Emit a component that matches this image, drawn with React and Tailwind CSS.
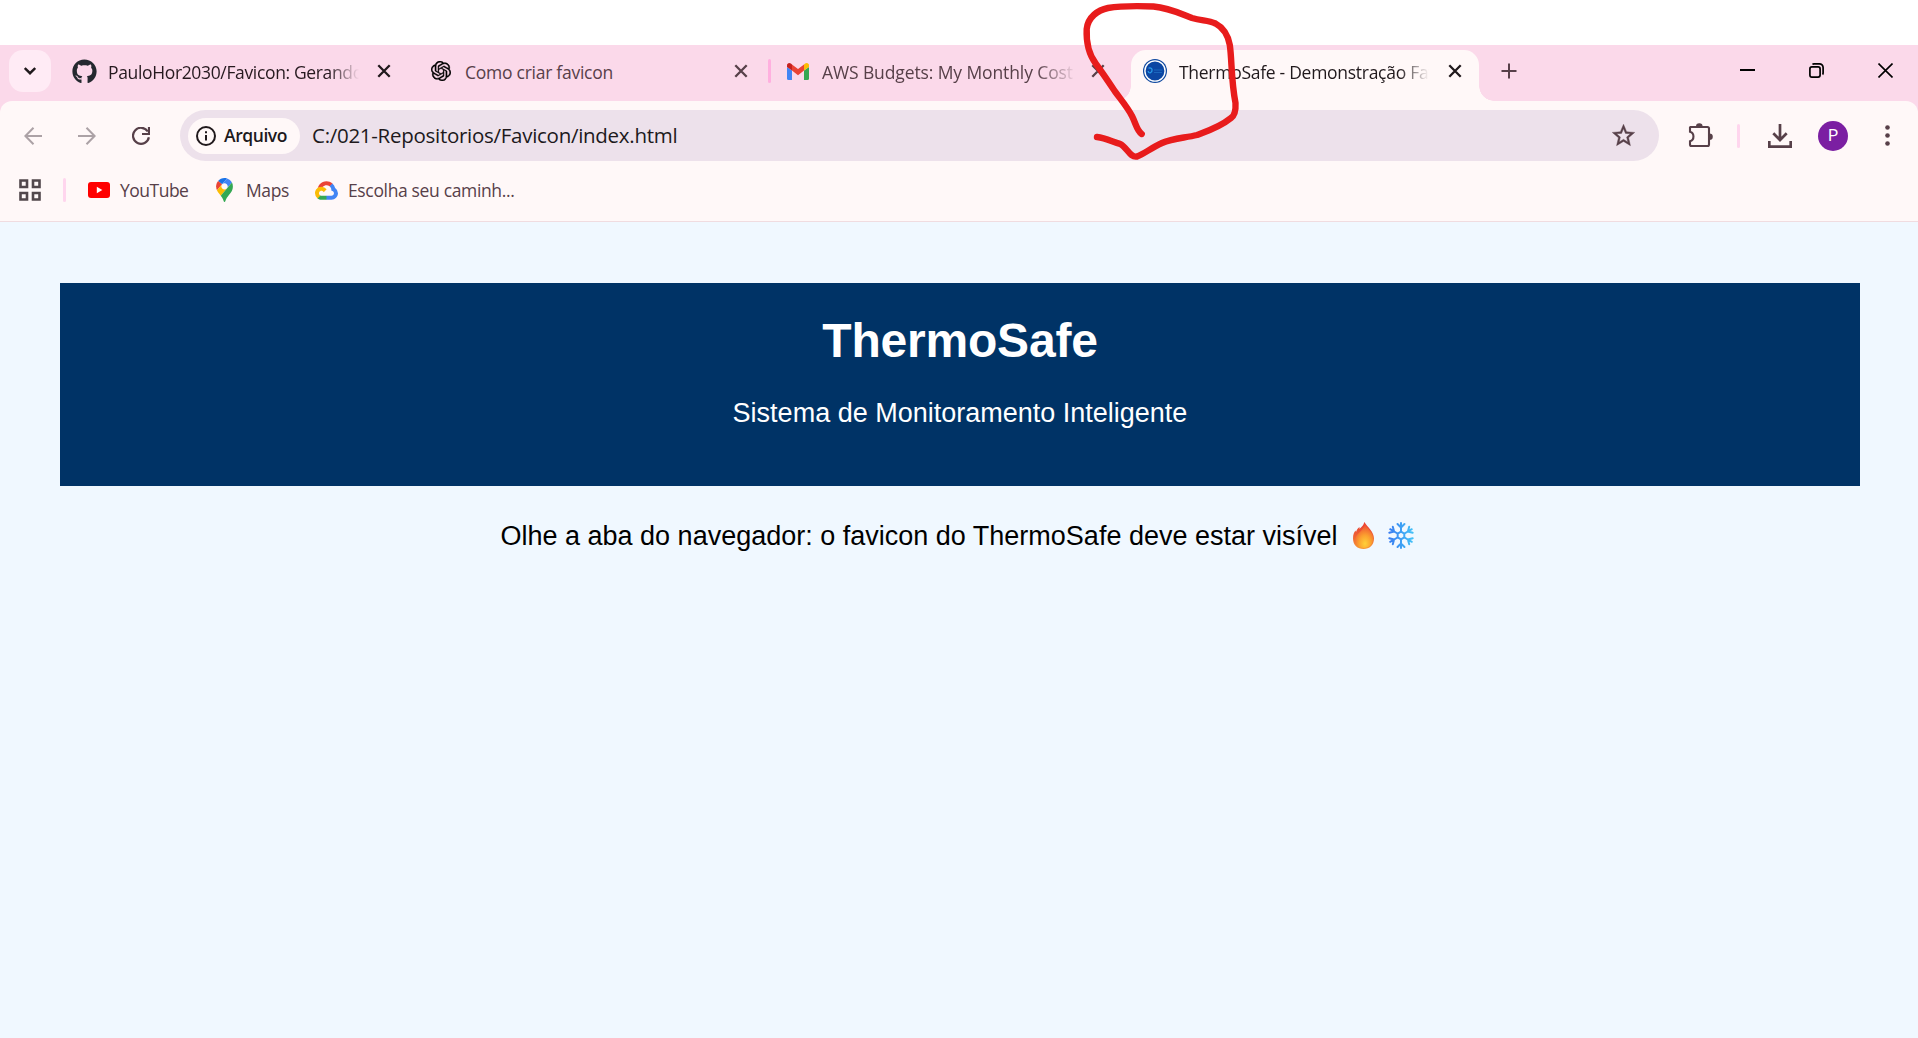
import { FaGithub } from "react-icons/fa";
import { SiOpenai } from "react-icons/si";

function Close({ className = "text-[#574049]" }) {
  return (
    <svg viewBox="0 0 14 14" className={`size-3.5 shrink-0 ${className}`} fill="none" stroke="currentColor" strokeWidth="2.3">
      <path d="M1.3 1.3 12.7 12.7M12.7 1.3 1.3 12.7" />
    </svg>
  );
}

function Gmail() {
  return (
    <svg viewBox="0 0 22 17" className="h-[17px] w-[22px] shrink-0">
      <path fill="#4285f4" d="M0 4v11.5A1.5 1.5 0 0 0 1.5 17H5V7.5z" />
      <path fill="#34a853" d="M17 7.5V17h3.5a1.5 1.5 0 0 0 1.5-1.5V4z" />
      <path fill="#ea4335" d="m5 1.5 6 4.6 6-4.6v6L11 12.2 5 7.5z" />
      <path fill="#c5221f" d="M0 2.3C0 .3 2.2-.7 3.9.6L5 1.5v6L0 4z" />
      <path fill="#fbbc04" d="M17 1.5 18.1.6C19.8-.7 22 .3 22 2.3V4l-5 3.5z" />
    </svg>
  );
}

function ThermoSafeIcon() {
  return (
    <svg viewBox="0 0 24 24" className="size-6 shrink-0">
      <circle cx="12" cy="12" r="12" fill="#0f49a0" />
      <circle cx="12" cy="12" r="10.1" fill="#0b46a3" stroke="#fff" strokeWidth="1.4" />
      <path d="M5.500 9.300c1.500-.8 3.400-.3 3.600 1.500.2 1.500-.8 2.600-2 3.200-1.200-.2-2-.9-2-2" fill="none" stroke="#299be8" strokeWidth="1.200" />
      <path d="M11 11h8.500M11 13.500h8" stroke="#1b66bd" strokeWidth="1.100" />
    </svg>
  );
}

function Star() {
  return (
    <svg viewBox="0 0 24 24" className="size-[27px] shrink-0" fill="#574049" stroke="#574049" strokeWidth=".35">
      <path d="m22 9.240-7.190-.62L12 2 9.190 8.630 2 9.240l5.460 4.730L5.820 21 12 17.270 18.180 21l-1.630-7.030zM12 15.400l-3.760 2.270 1-4.280-3.320-2.880 4.380-.38L12 6.100l1.710 4.040 4.380.38-3.320 2.880 1 4.280z" />
    </svg>
  );
}

function Puzzle() {
  return (
    <svg viewBox="0 0 25 25" className="size-[25px] shrink-0" fill="none" stroke="#574049" strokeWidth="2.100">
      <path d="M2.500 4h17A1.500 1.500 0 0 1 21 5.500v16a1.500 1.500 0 0 1-1.500 1.500h-16A1.500 1.500 0 0 1 2 21.500v-3.300c4.600-1.200 4.600-8.200 0-9.400V4.500z" />
      <path d="M8 3.500a3.300 3.300 0 0 1 6.600 0zM21.500 10.400a3.300 3.300 0 0 1 0 6.600z" fill="#574049" stroke="none" />
    </svg>
  );
}

function MapsPin() {
  return (
    <svg viewBox="0 0 92.300 132.300" className="h-6 w-[17px] shrink-0">
      <path fill="#1a73e8" d="M60.200 2.200C55.800.8 51 0 46.100 0 32 0 19.300 6.400 10.800 16.500l21.800 18.300z" />
      <path fill="#ea4335" d="M10.800 16.500C4.100 24.500 0 34.900 0 46.100c0 8.700 1.700 15.700 4.600 22l28-33.300z" />
      <path fill="#4285f4" d="M46.200 28.500c9.800 0 17.700 7.900 17.700 17.700 0 4.300-1.600 8.300-4.200 11.400 0 0 13.900-16.600 27.500-32.700-5.600-10.800-15.300-19-27-22.700L32.600 34.800c3.300-3.800 8.100-6.300 13.600-6.300" />
      <path fill="#fbbc04" d="M46.200 63.800c-9.800 0-17.700-7.900-17.700-17.700 0-4.300 1.500-8.300 4.100-11.300l-28 33.300c4.800 10.600 12.800 19.200 21 29.900l34.100-40.500c-3.300 3.900-8.100 6.300-13.500 6.300" />
      <path fill="#34a853" d="M59.100 109.200c15.400-24.100 33.300-35 33.300-63 0-7.700-1.900-14.900-5.200-21.300L25.600 98c2.600 3.400 5.300 7.300 7.900 11.300 9.400 14.500 6.800 23.100 12.800 23.100s3.400-8.700 12.800-23.200" />
    </svg>
  );
}

function CloudLogo() {
  return (
    <svg viewBox="0 0 256 206" className="h-[19px] w-[23px] shrink-0">
      <path fill="#ea4335" d="m170.252 56.819 22.253-22.253 1.483-9.370C153.437-11.677 88.976-7.496 52.420 33.920 42.267 45.423 34.734 59.764 30.717 74.573l7.970-1.123 44.505-7.340 3.436-3.513c19.797-21.742 53.270-24.667 76.128-6.168z" />
      <path fill="#4285f4" d="M224.205 73.918a100.250 100.250 0 0 0-30.217-48.722l-31.232 31.232a55.515 55.515 0 0 1 20.379 44.037v5.544c15.350 0 27.797 12.450 27.797 27.796 0 15.352-12.446 27.573-27.797 27.573h-55.671l-5.466 5.934v33.340l5.466 5.231h55.670c39.930.311 72.553-31.494 72.864-71.424a72.303 72.303 0 0 0-31.793-60.541" />
      <path fill="#34a853" d="M71.870 205.796h55.593V161.290H71.870a27.275 27.275 0 0 1-11.480-2.498l-7.884 2.420-22.409 22.252-1.952 7.574c12.567 9.490 27.900 14.825 43.725 14.758" />
      <path fill="#fbbc05" d="M71.870 61.425C31.937 61.664-.237 94.228.001 134.160a72.301 72.301 0 0 0 28.222 56.880l32.248-32.246c-13.990-6.322-20.208-22.786-13.887-36.776 6.320-13.990 22.786-20.208 36.775-13.888a27.796 27.796 0 0 1 13.887 13.888l32.248-32.248A72.224 72.224 0 0 0 71.870 61.425" />
    </svg>
  );
}

function Flame() {
  return (
    <svg viewBox="0 0 21 27" className="h-[27px] w-[21px] shrink-0">
      <defs>
        <linearGradient id="flameOuter" x1="0" y1="0" x2="0" y2="1">
          <stop stopColor="#e83b32" />
          <stop offset=".55" stopColor="#ef6435" />
          <stop offset="1" stopColor="#f79a35" />
        </linearGradient>
        <radialGradient id="flameInner" cx=".55" cy=".82" r=".75">
          <stop stopColor="#ffd03a" />
          <stop offset=".45" stopColor="#fba12f" />
          <stop offset="1" stopColor="#ef4f34" />
        </radialGradient>
      </defs>
      <path fill="url(#flameOuter)" d="M11.300 0c3 5 9.700 9.500 9.700 16.500C21 23 16.500 27 10.500 27S0 23 0 16.500c0-4 1-6 2.500-8L3 10c1-2.500 1.700-3.700 3.500-5V7C8 5 10.500 4 11.300 0z" />
      <path fill="url(#flameInner)" d="M11.800 1.500c2.200 5.500 8.400 8.500 8.400 15 0 5.500-4 9.500-9.200 9.500s-9-3.500-9-8C2 11.500 11 9.500 11.800 1.500z" />
    </svg>
  );
}

function Snowflake() {
  return (
    <svg viewBox="-13 -13.500 26 27" className="h-[27px] w-[26px] shrink-0" fill="none" strokeWidth="2" strokeLinecap="round" strokeLinejoin="round">
      <defs>
        <linearGradient id="ice" gradientUnits="userSpaceOnUse" x1="-13" y1="0" x2="13" y2="0">
          <stop stopColor="#3779f0" />
          <stop offset="1" stopColor="#45c5f8" />
        </linearGradient>
      </defs>
      <g stroke="url(#ice)">
        <path d="M0-3.800 3.300-1.900V1.900L0 3.800-3.300 1.900V-1.900z" />
        <path d="M0-4v-8.500M-3.500-11.500 0-8 3.500-11.500M0 4v8.500M-3.500 11.500 0 8l3.500 3.500" />
        <path d="M3.500-2 10.800-6.300M8.200-8.800l-1.300 4.800 4.800 1.300M-3.500 2l-7.300 4.300M-8.200 8.800l1.300-4.800-4.800-1.300M3.500 2l7.300 4.300M8.200 8.800 6.900 4l4.800-1.300M-3.500-2l-7.300-4.300M-8.200-8.800-6.900-4l-4.800 1.300" />
      </g>
    </svg>
  );
}

function TabBar() {
  return (
    <div className="flex h-14 shrink-0 items-start bg-[#fbd9ea] text-[17.500px] text-[#574049]">
      <button className="mt-[5px] ml-[9px] flex size-[42px] items-center justify-center rounded-[14px] bg-[#ffebf5]">
        <svg viewBox="0 0 12 8" className="h-2 w-3" fill="none" stroke="#20191c" strokeWidth="2.400">
          <path d="m.8 1 5.200 5.200L11.200 1" />
        </svg>
      </button>

      <div className="ml-[21px] flex h-[52px] w-[319px] items-center text-[#26191f]">
        <FaGithub className="size-[25px] shrink-0 text-[#24292f]" />
        <span className="ml-[11px] w-[251px] overflow-hidden pt-0.5 whitespace-nowrap tracking-[-0.350px] [mask-image:linear-gradient(to_right,black_88%,transparent_100%)]">
          PauloHor2030/Favicon: Gerando
        </span>
        <Close className="ml-[18px] text-[#20191c]" />
      </div>

      <div className="ml-10 flex h-[52px] w-[317px] items-center">
        <SiOpenai className="size-[20px] shrink-0 stroke-black stroke-[0.4px] text-black" />
        <span className="ml-[14px] w-[250px] pt-0.5 whitespace-nowrap tracking-[-0.260px]">Como criar favicon</span>
        <Close className="ml-[19px]" />
      </div>

      <div className="ml-5 flex h-[52px] w-[3px] items-center">
        <span className="h-6 w-[3px] rounded-full bg-[#ffb0df]" />
      </div>

      <div className="ml-4 flex h-[52px] w-[318px] items-center">
        <Gmail />
        <span className="ml-[13px] w-[255px] overflow-hidden pt-0.5 whitespace-nowrap tracking-[-0.110px] [mask-image:linear-gradient(to_right,black_84%,transparent_100%)]">
          AWS Budgets: My Monthly Cost
        </span>
        <Close className="ml-[14px]" />
      </div>

      <div className="ml-[11px] size-[15px] self-end bg-[radial-gradient(circle_at_0_0,transparent_14.500px,#fff8f8_15px)]" />
      <div className="mt-[5px] flex h-[51px] w-[348px] items-start rounded-t-[15px] bg-[#fff8f8] pl-3 text-[#20191c]">
        <div className="flex h-[42px] items-center">
          <ThermoSafeIcon />
          <span className="ml-3 w-[250px] overflow-hidden pt-0.5 whitespace-nowrap tracking-[-0.280px] [mask-image:linear-gradient(to_right,black_88%,transparent_100%)]">
            ThermoSafe - Demonstração Favicon
          </span>
          <Close className="ml-[19px]" />
        </div>
      </div>
      <div className="size-[15px] self-end bg-[radial-gradient(circle_at_100%_0,transparent_14.500px,#fff8f8_15px)]" />
      <svg viewBox="0 0 16 16" className="mt-[18px] ml-[7px] size-4" fill="none" stroke="#574049" strokeWidth="2">
        <path d="M8 .5v15M.5 8h15" />
      </svg>

      <div className="mt-[18px] mr-[25px] ml-auto flex items-center gap-[54px] text-black">
        <svg viewBox="0 0 15 15" className="size-[15px]"><path d="M0 6h15v2H0z" fill="currentColor" /></svg>
        <svg viewBox="0 0 15 15" className="size-[15px]" fill="none" stroke="currentColor" strokeWidth="1.700">
          <rect x=".9" y="3.900" width="10.200" height="10.200" rx="2" />
          <path d="M3.500 1.500Q4 .9 5 .9h5.500a3.600 3.600 0 0 1 3.600 3.600V10q0 1-.6 1.500" />
        </svg>
        <svg viewBox="0 0 15 15" className="size-[15px]" stroke="currentColor" strokeWidth="1.600"><path d="m.5.5 14 14m0-14-14 14" /></svg>
      </div>
    </div>
  );
}

function AddressBar() {
  return (
    <div className="flex h-[51px] items-center">
      <div className="ml-6 flex w-[156px] items-center">
        <svg viewBox="0 0 18 18" className="size-[18px]" fill="none" stroke="#aca2a6" strokeWidth="2"><path d="M18 9H1.500M9.500.8 1.400 9l8.100 8.200" /></svg>
        <svg viewBox="0 0 18 18" className="ml-9 size-[18px]" fill="none" stroke="#aca2a6" strokeWidth="2"><path d="M0 9h16.500M8.500.8 16.600 9l-8.100 8.200" /></svg>
        <svg viewBox="0 0 18 18" className="ml-9 size-[18px]" fill="none" stroke="#574049" strokeWidth="2.200"><path d="M15.800 4.500A8 8 0 1 0 16.900 10.200M17 0v7h-7" /></svg>
      </div>
      <div className="flex h-[51px] w-[1479px] items-center rounded-full bg-[#ede1eb] pr-[22px] pl-2 text-[#20191c]">
        <div className="flex h-9 w-28 items-center rounded-full bg-[#fff8f8] pl-2">
          <svg viewBox="0 0 20 20" className="size-5" fill="none" stroke="currentColor" strokeWidth="2">
            <circle cx="10" cy="10" r="9" />
            <path d="M10 9v5.500M10 5.300v2" />
          </svg>
          <span className="ml-2 text-[17.500px] font-semibold tracking-[-0.430px]">Arquivo</span>
        </div>
        <span className="ml-3 text-[20.500px] tracking-[-0.280px]">C:/021-Repositorios/Favicon/index.html</span>
        <div className="ml-auto"><Star /></div>
      </div>
      <div className="ml-[29px] flex items-center">
        <Puzzle />
        <span className="ml-6 h-6 w-[3px] rounded-full bg-[#ffd6ee]" />
        <svg viewBox="0 0 24 24" className="ml-7 size-6" fill="none" stroke="#574049" strokeWidth="2.700">
          <path d="M12 0v15.500M5.300 9.300 12 16l6.700-6.700M1.300 17v5.700h21.400V17" />
        </svg>
        <span className="ml-[26px] flex size-[30px] items-center justify-center rounded-full bg-[#7b1fa2] font-['Roboto',sans-serif] text-base text-white">P</span>
        <svg viewBox="0 0 5 21" className="ml-[37px] h-[21px] w-[5px]" fill="#574049">
          <circle cx="2.500" cy="2.500" r="2.300" /><circle cx="2.500" cy="10.500" r="2.300" /><circle cx="2.500" cy="18.500" r="2.300" />
        </svg>
      </div>
    </div>
  );
}

function Bookmarks() {
  return (
    <div className="mt-2 flex h-[42px] items-center text-[17.500px] text-[#574049]">
      <svg viewBox="0 0 22 22" className="ml-[19px] size-[22px]" fill="none" stroke="#51474b" strokeWidth="2.600">
        <path d="M1.500 1.500h6.500v6.500H1.500zM14 1.500h6.500v6.500H14zM1.500 14h6.500v6.500H1.500zM14 14h6.500v6.500H14z" />
      </svg>
      <span className="ml-[22px] h-6 w-[3px] rounded-full bg-[#ffd6ee]" />
      <svg viewBox="0 0 22 16" className="ml-[22px] h-4 w-[22px]">
        <rect width="22" height="16" rx="3" fill="#f00" />
        <path d="m8.800 4.800 5.500 3.200-5.500 3.200z" fill="#fff" />
      </svg>
      <span className="ml-[10px] w-[69px] whitespace-nowrap tracking-[-0.500px]">YouTube</span>
      <div className="ml-[27px] flex items-center">
        <MapsPin />
        <span className="ml-[13px] w-[45px] tracking-[-0.400px]">Maps</span>
      </div>
      <div className="ml-6 flex items-center">
        <CloudLogo />
        <span className="ml-[10px] whitespace-nowrap tracking-[-0.350px]">Escolha seu caminh...</span>
      </div>
    </div>
  );
}

function RedMark() {
  return (
    <svg viewBox="0 0 260 170" className="pointer-events-none absolute top-0 left-[1060px] h-[170px] w-[260px]" fill="none" stroke="#e81c1c" strokeWidth="6.400" strokeLinecap="round" strokeLinejoin="round">
      <path d="M81.700 134C77 131 76 124 72 116C68 108 62 101 55 91.500C48 81 42 72 36 64C30 56 26 44 26.700 29C28 17 38 10 48 8C60 6 80 6 93.500 6.500C110 8 121 14 132 18C142 21 148 20 155.500 23.500C164 28 168 35 169.800 45C172 60 171 80 175.500 103C176 112 174 116 171 118C160 127 148 131 137 135C125 138 113 138 102 143C91 148 84 154 77 156.500C70 158 67 147 60 143.800C53 142 46 138 37 137" />
    </svg>
  );
}

export default function App() {
  return (
    <div className="relative flex h-[1038px] w-[1918px] flex-col overflow-hidden bg-white pt-[45px] font-['Open_Sans','Noto_Sans',sans-serif]">
      <TabBar />
      <div className="shrink-0 bg-[#fbd9ea]">
        <div className="h-[121px] rounded-t-[12px] border-b border-[#f0dce0] bg-[#fff8f8] pt-[9px]">
          <AddressBar />
          <Bookmarks />
        </div>
      </div>
      <main className="flex-1 bg-[#f0f8ff] pt-[61px] pl-0.5 text-center font-['Liberation_Sans',Arial,sans-serif] text-[27px] leading-[31px] text-black">
        <header className="mx-auto h-[203px] w-[1800px] bg-[#003366] pt-[30px] text-white">
          <h1 className="text-5xl leading-[55px] font-bold tracking-[-0.200px]">ThermoSafe</h1>
          <p className="mt-[30px]">Sistema de Monitoramento Inteligente</p>
        </header>
        <div className="mt-[35px] flex items-center justify-center pr-1.5">
          <p>Olhe a aba do navegador: o favicon do ThermoSafe deve estar visível</p>
          <span className="-mt-0.5 ml-[15px] flex items-center gap-[14px]">
            <Flame />
            <Snowflake />
          </span>
        </div>
      </main>
      <RedMark />
    </div>
  );
}
